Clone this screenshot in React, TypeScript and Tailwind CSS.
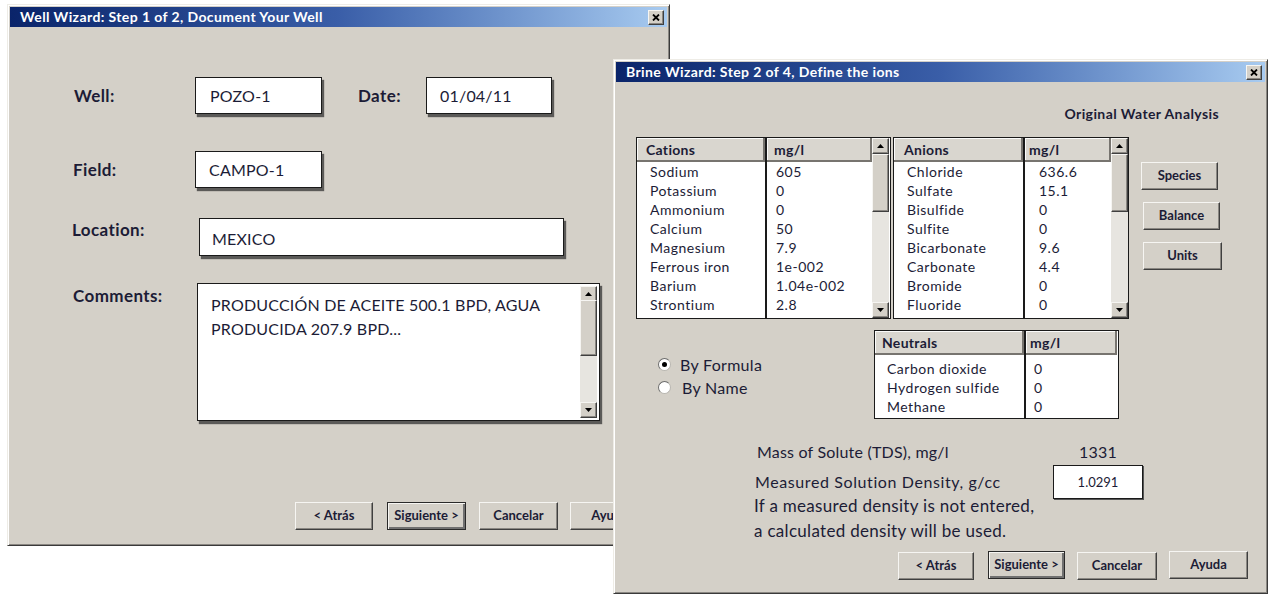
import type { ReactNode } from "react";

const ink = "text-[#1c1c36]";
const raised =
  "border border-t-[#f6f5f2] border-l-[#f6f5f2] border-r-[#3f3f3f] border-b-[#3f3f3f] bg-[#d4d0c8] shadow-[inset_-1px_-1px_0_#8a8782]";

function CloseButton() {
  return (
    <div className={`flex h-[15px] w-[16px] items-center justify-center ${raised}`}>
      <svg viewBox="0 0 8 7" className="h-[7px] w-[8px]">
        <path d="M1 0.5 L7 6.5 M7 0.5 L1 6.5" stroke="#000" strokeWidth="1.8" />
      </svg>
    </div>
  );
}

function Window({
  title,
  className,
  children,
}: {
  title: string;
  className: string;
  children: ReactNode;
}) {
  return (
    <div
      className={`absolute flex flex-col border border-t-[#eeece6] border-l-[#eeece6] border-r-[#3a3a3a] border-b-[#3a3a3a] bg-[#d4d0c8] p-[2px] shadow-[inset_1px_1px_0_#fff,inset_-1px_-1px_0_#8a8782] ${className}`}
    >
      <div className="flex h-[20px] shrink-0 items-center justify-between bg-linear-to-r from-[#0a246a] via-[#3a5ea8] to-[#a8cbf0] pl-[10px] pr-[3px]">
        <span className="text-[14px] font-bold leading-none tracking-[0.4px] text-white">{title}</span>
        <CloseButton />
      </div>
      <div className="flex flex-1 flex-col">{children}</div>
    </div>
  );
}

function Arrow({ down }: { down?: boolean }) {
  return (
    <svg viewBox="0 0 7 4" className="h-[4px] w-[7px]">
      <path d={down ? "M0 0 L7 0 L3.5 4 Z" : "M0 4 L7 4 L3.5 0 Z"} fill="#000" />
    </svg>
  );
}

function ScrollBar({ thumb }: { thumb: string }) {
  return (
    <div className="flex w-[17px] shrink-0 flex-col bg-[#e7e5e0]">
      <div className={`flex h-[16px] items-center justify-center ${raised}`}>
        <Arrow />
      </div>
      <div className={`${thumb} ${raised}`} />
      <div className={`mt-auto flex h-[16px] items-center justify-center ${raised}`}>
        <Arrow down />
      </div>
    </div>
  );
}

function Button({ label, className, primary }: { label: string; className: string; primary?: boolean }) {
  return (
    <div
      className={`flex h-[28px] items-center justify-center text-[13px] font-bold ${ink} ${
        primary
          ? "border border-[#2a2a2a] bg-[#d4d0c8] shadow-[inset_1px_1px_0_#f6f5f2,inset_-2px_-2px_0_#707070]"
          : raised
      } ${className}`}
    >
      {label}
    </div>
  );
}

function Field({ value, className }: { value: string; className: string }) {
  return (
    <div
      className={`flex items-center border border-[#1a1a1a] bg-white text-[16px] tracking-[0.2px] ${ink} shadow-[2px_3px_1px_rgba(40,40,40,0.7)] ${className}`}
    >
      {value}
    </div>
  );
}

function HeadCell({ label, className }: { label: string; className: string }) {
  return (
    <div
      className={`flex h-[24px] shrink-0 items-center border-r-2 border-b-2 border-r-[#77746f] border-b-[#77746f] bg-[#d9d6cf] text-[14px] font-bold tracking-[0.3px] ${ink} shadow-[inset_1px_1px_0_#fbfbfa] ${className}`}
    >
      {label}
    </div>
  );
}

type Row = [string, string];

function IonTable({
  heads,
  rows,
  box,
  nameCol,
  valueCol,
  namePad,
  valuePad,
  headPad,
  valueHeadPad,
  bodyPad,
  thumb,
}: {
  heads: [string, string];
  rows: Row[];
  box: string;
  nameCol: string;
  valueCol: string;
  namePad: string;
  valuePad: string;
  headPad: string;
  valueHeadPad: string;
  bodyPad: string;
  thumb?: string;
}) {
  const cell = `h-[19px] text-[14px] leading-[19px] tracking-[0.5px] ${ink}`;
  return (
    <div className={`flex shrink-0 border border-[#1a1a1a] bg-white ${box}`}>
      <div className={`flex shrink-0 flex-col border-r-2 border-[#1a1a1a] ${nameCol}`}>
        <HeadCell label={heads[0]} className={headPad} />
        <div className={`flex flex-col ${bodyPad} ${namePad}`}>
          {rows.map(([name]) => (
            <div key={name} className={cell}>
              {name}
            </div>
          ))}
        </div>
      </div>
      <div className={`flex shrink-0 flex-col ${valueCol}`}>
        <HeadCell label={heads[1]} className={valueHeadPad} />
        <div className={`flex flex-col ${bodyPad} ${valuePad}`}>
          {rows.map(([name, v]) => (
            <div key={name} className={cell}>
              {v}
            </div>
          ))}
        </div>
      </div>
      {thumb ? <ScrollBar thumb={thumb} /> : null}
    </div>
  );
}

const cations: Row[] = [
  ["Sodium", "605"],
  ["Potassium", "0"],
  ["Ammonium", "0"],
  ["Calcium", "50"],
  ["Magnesium", "7.9"],
  ["Ferrous iron", "1e-002"],
  ["Barium", "1.04e-002"],
  ["Strontium", "2.8"],
];

const anions: Row[] = [
  ["Chloride", "636.6"],
  ["Sulfate", "15.1"],
  ["Bisulfide", "0"],
  ["Sulfite", "0"],
  ["Bicarbonate", "9.6"],
  ["Carbonate", "4.4"],
  ["Bromide", "0"],
  ["Fluoride", "0"],
];

const neutrals: Row[] = [
  ["Carbon dioxide", "0"],
  ["Hydrogen sulfide", "0"],
  ["Methane", "0"],
];

function Radio({ label, checked, gap }: { label: string; checked?: boolean; gap: string }) {
  return (
    <div className={`flex h-[23px] items-center text-[16px] tracking-[0.3px] ${ink}`}>
      <div className="flex h-[13px] w-[13px] items-center justify-center rounded-full border border-t-[#6b6b6b] border-l-[#6b6b6b] border-r-[#b8b6b0] border-b-[#b8b6b0] bg-white">
        {checked ? <div className="h-[5px] w-[5px] rounded-full bg-black" /> : null}
      </div>
      <span className={gap}>{label}</span>
    </div>
  );
}

function WellWizard() {
  const label = `shrink-0 text-[17px] font-bold tracking-[0.4px] ${ink}`;
  return (
    <Window
      title="Well Wizard: Step 1 of 2, Document Your Well"
      className="left-[7px] top-[4px] h-[542px] w-[663px]"
    >
      <div className="mt-[50px] flex items-center pl-[64px]">
        <span className={`${label} w-[121px]`}>Well:</span>
        <Field value="POZO-1" className="h-[37px] w-[127px] pl-[14px]" />
        <span className={`${label} ml-[36px] w-[68px]`}>Date:</span>
        <Field value="01/04/11" className="h-[37px] w-[126px] pl-[13px]" />
      </div>
      <div className="mt-[37px] flex items-center pl-[63px]">
        <span className={`${label} w-[122px]`}>Field:</span>
        <Field value="CAMPO-1" className="h-[37px] w-[127px] pl-[13px]" />
      </div>
      <div className="mt-[30px] flex items-start pl-[62px]">
        <span className={`${label} mt-[2px] w-[127px] leading-[20px]`}>Location:</span>
        <Field value="MEXICO" className="h-[38px] w-[365px] pl-[12px] pt-[4px]" />
      </div>
      <div className="mt-[27px] flex items-start pl-[63px]">
        <span className={`${label} mt-[3px] w-[124px] leading-[20px]`}>Comments:</span>
        <div className="flex h-[138px] w-[403px] border border-[#1a1a1a] bg-white shadow-[2px_3px_1px_rgba(40,40,40,0.7)]">
          <div className={`flex-1 pl-[13px] pt-[9px] text-[16px] leading-[24px] tracking-[0.2px] ${ink}`}>
            <div>PRODUCCIÓN DE ACEITE 500.1 BPD, AGUA</div>
            <div>PRODUCIDA 207.9 BPD...</div>
          </div>
          <div className="flex py-[2px] pr-[2px]">
            <ScrollBar thumb="mt-[-2px] h-[56px]" />
          </div>
        </div>
      </div>
      <div className="mt-[81px] flex items-start pl-[285px]">
        <Button label="< Atrás" className="w-[78px]" />
        <Button label="Siguiente >" className="ml-[14px] w-[79px]" primary />
        <Button label="Cancelar" className="ml-[13px] w-[79px]" />
        <Button label="Ayuda" className="ml-[12px] w-[79px]" />
      </div>
    </Window>
  );
}

function BrineWizard() {
  return (
    <Window
      title="Brine Wizard: Step 2 of 4, Define the ions"
      className="left-[613px] top-[59px] h-[535px] w-[655px]"
    >
      <div className={`mt-[24px] self-end pr-[46px] text-[14px] font-bold leading-[16px] tracking-[0.4px] ${ink}`}>
        Original Water Analysis
      </div>

      <div className="mt-[15px] flex items-start pl-[20px]">
        <IonTable
          heads={["Cations", "mg/l"]}
          rows={cations}
          box="h-[182px] w-[255px]"
          nameCol="w-[130px]"
          valueCol="w-[105px]"
          headPad="pl-[9px]"
          valueHeadPad="pl-[7px]"
          namePad="pl-[13px]"
          valuePad="pl-[9px]"
          bodyPad=""
          thumb="h-[58px]"
        />
        <IonTable
          heads={["Anions", "mg/l"]}
          rows={anions}
          box="ml-[2px] h-[182px] w-[236px]"
          nameCol="w-[131px]"
          valueCol="w-[86px]"
          headPad="pl-[10px]"
          valueHeadPad="pl-[4px]"
          namePad="pl-[13px]"
          valuePad="pl-[14px]"
          bodyPad=""
          thumb="h-[58px]"
        />
        <div className="ml-[12px] flex flex-col pt-[25px]">
          <Button label="Species" className="w-[77px]" />
          <Button label="Balance" className="ml-[2px] mt-[12px] w-[77px]" />
          <Button label="Units" className="ml-[2px] mt-[12px] w-[79px]" />
        </div>
      </div>

      <div className="mt-[11px] flex items-start pl-[42px]">
        <div className="flex w-[216px] shrink-0 flex-col pt-[23px]">
          <Radio label="By Formula" checked gap="ml-[9px]" />
          <Radio label="By Name" gap="ml-[11px]" />
        </div>
        <IonTable
          heads={["Neutrals", "mg/l"]}
          rows={neutrals}
          box="h-[89px] w-[245px]"
          nameCol="w-[151px]"
          valueCol="w-[91px]"
          headPad="pl-[7px]"
          valueHeadPad="pl-[4px]"
          namePad="pl-[12px]"
          valuePad="pl-[8px]"
          bodyPad="pt-[4px]"
        />
      </div>

      <div className={`mt-[24px] flex pl-[141px] text-[16px] leading-[18px] tracking-[0.2px] ${ink}`}>
        <span className="w-[322px]">Mass of Solute (TDS), mg/l</span>
        <span>1331</span>
      </div>
      <div className={`mt-[4px] flex items-center pl-[139px] text-[16px] leading-[18px] ${ink}`}>
        <span className="w-[298px] tracking-[0.6px]">Measured Solution Density, g/cc</span>
        <div className="flex h-[34px] w-[90px] items-center justify-center border border-[#1a1a1a] bg-white text-[13px] shadow-[1px_1px_0_#555]">
          1.0291
        </div>
      </div>
      <div className={`-mt-[6px] flex flex-col pl-[138px] text-[17px] leading-[25px] tracking-[0.3px] ${ink}`}>
        <span>If a measured density is not entered,</span>
        <span>a calculated density will be used.</span>
      </div>

      <div className="mt-[8px] flex items-start pl-[282px]">
        <Button label="< Atrás" className="mt-[1px] w-[76px]" />
        <Button label="Siguiente >" className="ml-[14px] w-[77px]" primary />
        <Button label="Cancelar" className="ml-[12px] mt-[1px] w-[80px]" />
        <Button label="Ayuda" className="ml-[12px] w-[79px]" />
      </div>
    </Window>
  );
}

export default function App() {
  return (
    <div className="relative h-[596px] w-[1269px] overflow-hidden bg-white font-['Lato',sans-serif]">
      <WellWizard />
      <BrineWizard />
    </div>
  );
}
